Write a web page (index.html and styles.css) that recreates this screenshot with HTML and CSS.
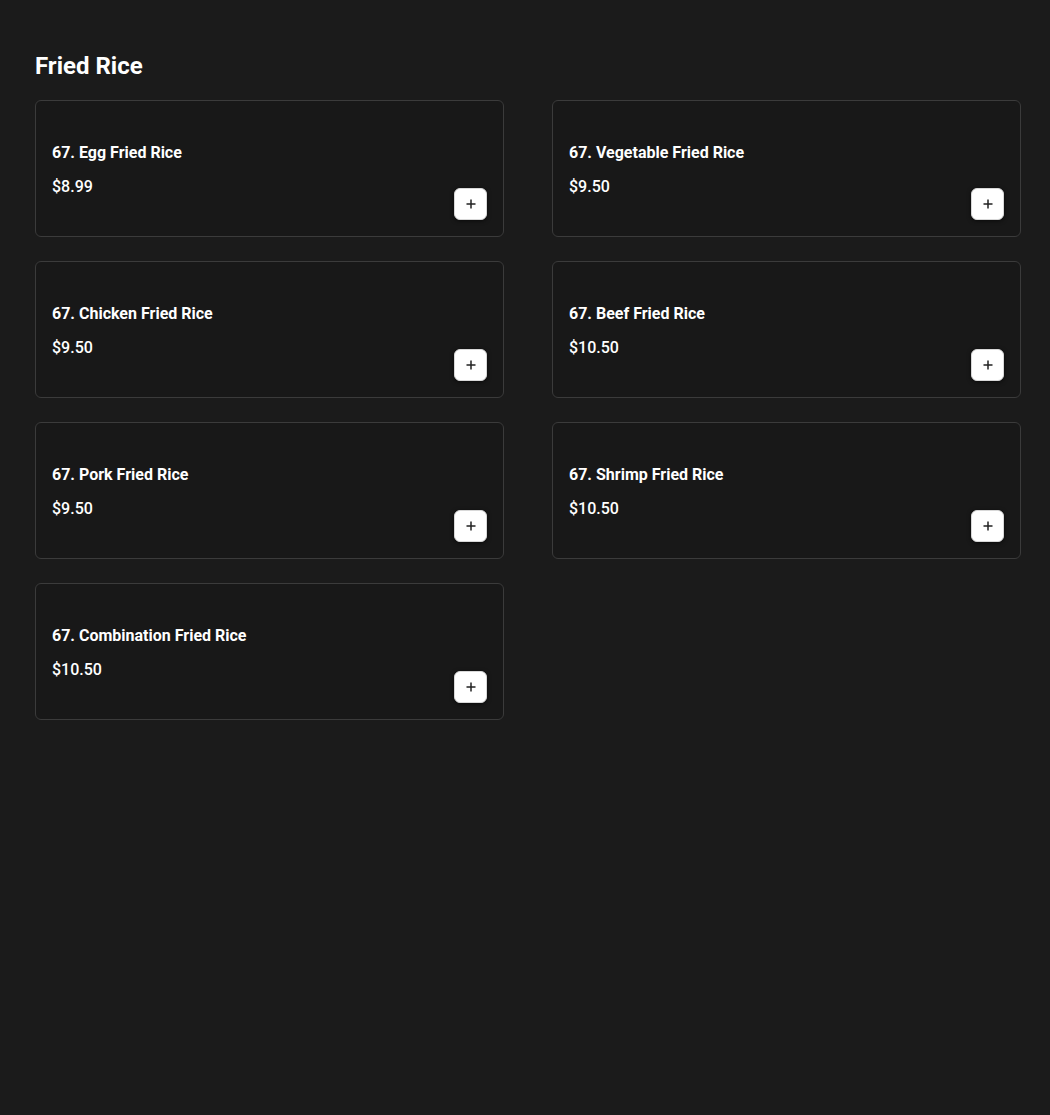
FILE: index.html
```html
<!DOCTYPE html>
<html lang="en">
<head>
<meta charset="utf-8">
<title>Fried Rice</title>
<link rel="stylesheet" href="styles.css">
</head>
<body>
<main class="page">
  <h2 class="section-title">Fried Rice</h2>
  <div class="grid">
    <div class="card">
      <div class="info"><div class="name">67. Egg Fried Rice</div><div class="price">$8.99</div></div>
      <button class="add" aria-label="Add"><svg width="12" height="12" viewBox="0 0 12 12"><path d="M6 1.5v9M1.5 6h9" stroke="#222" stroke-width="1.5" fill="none"/></svg></button>
    </div>
    <div class="card">
      <div class="info"><div class="name">67. Vegetable Fried Rice</div><div class="price">$9.50</div></div>
      <button class="add" aria-label="Add"><svg width="12" height="12" viewBox="0 0 12 12"><path d="M6 1.5v9M1.5 6h9" stroke="#222" stroke-width="1.5" fill="none"/></svg></button>
    </div>
    <div class="card">
      <div class="info"><div class="name">67. Chicken Fried Rice</div><div class="price">$9.50</div></div>
      <button class="add" aria-label="Add"><svg width="12" height="12" viewBox="0 0 12 12"><path d="M6 1.5v9M1.5 6h9" stroke="#222" stroke-width="1.5" fill="none"/></svg></button>
    </div>
    <div class="card">
      <div class="info"><div class="name">67. Beef Fried Rice</div><div class="price">$10.50</div></div>
      <button class="add" aria-label="Add"><svg width="12" height="12" viewBox="0 0 12 12"><path d="M6 1.5v9M1.5 6h9" stroke="#222" stroke-width="1.5" fill="none"/></svg></button>
    </div>
    <div class="card">
      <div class="info"><div class="name">67. Pork Fried Rice</div><div class="price">$9.50</div></div>
      <button class="add" aria-label="Add"><svg width="12" height="12" viewBox="0 0 12 12"><path d="M6 1.5v9M1.5 6h9" stroke="#222" stroke-width="1.5" fill="none"/></svg></button>
    </div>
    <div class="card">
      <div class="info"><div class="name">67. Shrimp Fried Rice</div><div class="price">$10.50</div></div>
      <button class="add" aria-label="Add"><svg width="12" height="12" viewBox="0 0 12 12"><path d="M6 1.5v9M1.5 6h9" stroke="#222" stroke-width="1.5" fill="none"/></svg></button>
    </div>
    <div class="card">
      <div class="info"><div class="name">67. Combination Fried Rice</div><div class="price">$10.50</div></div>
      <button class="add" aria-label="Add"><svg width="12" height="12" viewBox="0 0 12 12"><path d="M6 1.5v9M1.5 6h9" stroke="#222" stroke-width="1.5" fill="none"/></svg></button>
    </div>
  </div>
</main>
</body>
</html>
```
FILE: styles.css
```css
* { box-sizing: border-box; }
html, body {
  margin: 0;
  background: #1b1b1b;
  color: #f5f5f5;
  font-family: Roboto, "Liberation Sans", sans-serif;
}
.page {
  padding: 50px 30px 0 35px;
}
.section-title {
  margin: 0 0 18px;
  font-size: 24px;
  line-height: 32px;
  font-weight: 700;
  color: #ffffff;
}
.grid {
  display: grid;
  grid-template-columns: 469px 469px;
  column-gap: 48px;
  row-gap: 24px;
}
.card {
  height: 137px;
  border: 1px solid #3b3b3b;
  border-radius: 6px;
  background: #181818;
  padding: 16px;
  display: flex;
  justify-content: space-between;
  align-items: center;
}
.info {
  display: flex;
  flex-direction: column;
  gap: 10px;
  margin-top: 2px;
}
.name {
  font-size: 16px;
  line-height: 24px;
  font-weight: 700;
  color: #ffffff;
}
.price {
  font-size: 16px;
  line-height: 24px;
  font-weight: 500;
  color: #ffffff;
}
.add {
  align-self: flex-end;
  width: 33px;
  height: 32px;
  margin-right: 0;
  border: 1px solid #d8d8d8;
  border-radius: 6px;
  background: #ffffff;
  padding: 0;
  display: flex;
  align-items: center;
  justify-content: center;
  box-shadow: 0 1px 4px rgba(0,0,0,0.6);
  cursor: pointer;
}
.add svg { display: block; }
```
